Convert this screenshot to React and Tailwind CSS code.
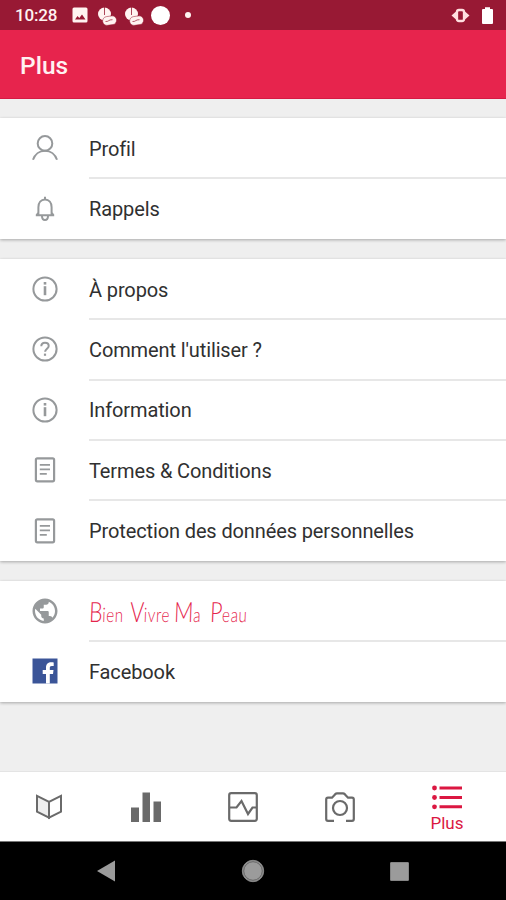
import React from "react";

const line = { fill: "none", stroke: "currentColor", strokeWidth: 2 };

function UserIcon() {
  return (
    <svg width="26" height="26" viewBox="0 0 26 26" {...line}>
      <circle cx="13" cy="8.400" r="7.300" />
      <path d="M1 24.800c1.800-5.500 6.500-9 12-9s10.200 3.500 12 9" />
    </svg>
  );
}

function BellIcon() {
  return (
    <svg width="26" height="26" viewBox="0 0 26 26" {...line}>
      <path d="M13 .800v2.500M3.800 19.300h18.400M6.400 19V11.200c0-4.500 2.600-7.700 6.600-7.700s6.600 3.200 6.600 7.700V19M4.500 19.300l2-2.800M21.500 19.300l-2-2.800" />
      <path d="M10 20c0 2.600 1.200 4 3 4s3-1.400 3-4" />
    </svg>
  );
}

function InfoIcon() {
  return (
    <svg width="26" height="26" viewBox="0 0 26 26" {...line}>
      <circle cx="13" cy="13" r="11.600" />
      <path d="M13 10.200v9" strokeWidth="2.600" />
      <path d="M13 6v2.600" strokeWidth="2.600" />
    </svg>
  );
}

function HelpIcon() {
  return (
    <svg width="26" height="26" viewBox="0 0 26 26" {...line}>
      <circle cx="13" cy="13" r="11.600" />
      <path d="M9.300 10.300c0-2.200 1.500-3.500 3.700-3.500s3.700 1.300 3.700 3.200c0 2.600-3.600 2.900-3.600 5.800" />
      <path d="M13 17.600v2.200" strokeWidth="2.200" />
    </svg>
  );
}

function DocumentIcon() {
  return (
    <svg width="26" height="26" viewBox="0 0 26 26" {...line}>
      <rect x="3.900" y="1.300" width="18.200" height="23" rx="1.500" strokeWidth="2.200" />
      <path d="M7.800 7.800h10.200M7.800 12.300h10.200M7.800 16.800h7" strokeWidth="1.700" />
    </svg>
  );
}

function GlobeIcon() {
  return (
    <svg width="30" height="30" viewBox="0 0 24 24" fill="currentColor">
      <path d="M12 2C6.480 2 2 6.480 2 12s4.480 10 10 10 10-4.480 10-10S17.520 2 12 2zm-1 17.930c-3.950-.49-7-3.850-7-7.930 0-.62.080-1.210.210-1.790L9 15v1c0 1.100.9 2 2 2v1.930zm6.900-2.540c-.26-.81-1-1.390-1.900-1.390h-1v-3c0-.55-.45-1-1-1H8v-2h2c.55 0 1-.45 1-1V7h2c1.100 0 2-.9 2-2v-.41c2.930 1.190 5 4.060 5 7.410 0 2.080-.8 3.970-2.100 5.390z" />
    </svg>
  );
}

function FacebookIcon() {
  return (
    <svg width="26" height="26" viewBox="0 0 26 26">
      <path fill="#3b5598" d="M.500.500h25v25H.500z" />
      <path fill="#fff" d="M14 25.500V16h-3.300v-3.900H14V9.400c0-3.500 2.200-5.200 5.200-5.200 1.100 0 2 .1 2.500.2v3.500h-1.900c-1.600 0-2 .8-2 2v2.200h3.700l-.5 3.900h-3.200v9.500z" />
    </svg>
  );
}

// Hand-lettered brand name: tall capitals over small, narrow lowercase
function BrandName() {
  const words = [
    ["B", "ien", "w-[41px]"],
    ["V", "ivre", "w-[44px]"],
    ["M", "a", "w-[36px]"],
    ["P", "eau", "w-[40px]"],
  ];
  return (
    <span className="flex items-baseline pt-[3px] font-['Lato',sans-serif] font-light text-[#e5254c]" aria-label="Bien Vivre Ma Peau">
      {words.map(([cap, rest, width]) => (
        <span key={cap} className={`${width} flex-none`}>
          <span className="inline-block origin-left -skew-x-3 scale-x-[.76] whitespace-nowrap">
            <span className="text-[28px] leading-none">{cap}</span>
            <span className="text-[20px] leading-none tracking-[0.8px]">{rest}</span>
          </span>
        </span>
      ))}
    </span>
  );
}

const sections = [
  [
    { icon: UserIcon, label: "Profil" },
    { icon: BellIcon, label: "Rappels" },
  ],
  [
    { icon: InfoIcon, label: "À propos" },
    { icon: HelpIcon, label: "Comment l'utiliser ?" },
    { icon: InfoIcon, label: "Information" },
    { icon: DocumentIcon, label: "Termes & Conditions" },
    { icon: DocumentIcon, label: "Protection des données personnelles" },
  ],
  [
    { icon: GlobeIcon, label: <BrandName /> },
    { icon: FacebookIcon, label: "Facebook" },
  ],
];

function Row({ icon: Icon, label, first }) {
  return (
    <li className="flex h-[60.400px] pl-8">
      <span className="mr-8 flex w-[25px] flex-none items-center justify-center text-[#96999b]">
        <span className="flex flex-none"><Icon /></span>
      </span>
      <span
        className={`-mt-px flex flex-1 items-center whitespace-nowrap border-t-2 ${first ? "border-transparent pt-px" : "border-[#e7e7e7]"}`}
      >
        {label}
      </span>
    </li>
  );
}

function CookieIcon() {
  return (
    <svg width="20" height="19" viewBox="0 0 20 19">
      <circle cx="7.500" cy="7" r="6.500" fill="#fff3f1" />
      <path d="M7.500 0v8" stroke="#981934" strokeWidth=".8" />
      <rect x="5.500" y="9.300" width="14" height="8.800" rx="4.400" fill="#fff3f1" stroke="#981934" strokeWidth=".5" transform="rotate(-8 12 13)" />
      <path d="M8.500 14.500c3 .5 3-2 7-1.800" fill="none" stroke="#981934" strokeWidth=".7" />
    </svg>
  );
}

function StatusBar() {
  return (
    <div className="flex h-[30px] items-center bg-[#981934] pl-[15px] pr-[13px] text-[#fff3f1]">
      <span className="w-[57px] pt-0.5 text-[17px] font-medium tracking-[-0.2px]">10:28</span>
      <svg width="16" height="16" viewBox="0 0 16 16">
        <path fill="currentColor" fillRule="evenodd" d="M2 .5h12q1.500 0 1.500 1.500v12q0 1.500-1.500 1.500H2Q.5 15.500.5 14V2Q.5.500 2 .5zM3 12.500h10.500L10 7.500l-2.700 3.600-1.800-2z" />
      </svg>
      <span className="ml-[9px] mr-[7px] pt-0.5"><CookieIcon /></span>
      <span className="pt-0.5"><CookieIcon /></span>
      <span className="ml-[7px] size-[19px] rounded-full bg-white" />
      <span className="ml-[15px] size-[6px] rounded-full bg-[#fff3f1]" />
      <svg className="ml-auto mr-[12px]" width="19" height="15" viewBox="0 0 19 15" fill="#ffdfe0">
        <path d="M5 3.500v8L.500 7.500zM14 3.500v8l4.500-4z" />
        <rect x="6" y="2" width="7" height="11" rx="2" fill="#981934" stroke="#ffdfe0" strokeWidth="2.300" />
      </svg>
      <svg width="11" height="17" viewBox="0 0 11 17" fill="#fff">
        <path d="M3 2V.3h5V2h2q1 0 1 1v13q0 1-1 1H1q-1 0-1-1V3q0-1 1-1z" />
      </svg>
    </div>
  );
}

function TabBar() {
  return (
    <nav className="flex h-[70px] flex-none border-t border-[#e4e4e4] bg-white text-[#6a6a6a]">
      <button className="flex w-[97px] items-center justify-center" aria-label="Journal">
        <svg width="28" height="28" viewBox="0 0 28 28" {...line}>
          <path fill="#eeeeee" d="M2 2.800 14 8.800v15.800L2 18.600z" />
          <path d="M14 8.800 26 2.800v15.800l-12 6z" />
        </svg>
      </button>
      <button className="flex w-[97px] items-center justify-center" aria-label="Statistiques">
        <svg width="30" height="30" viewBox="0 0 30 30" fill="currentColor">
          <path d="M0 15.500h8V30H0zM11.500.5h7.500V30h-7.500zM22.500 9.500H30V30h-7.500z" />
        </svg>
      </button>
      <button className="flex w-[97px] items-center justify-center" aria-label="Suivi">
        <svg width="30" height="30" viewBox="0 0 30 30" {...line} strokeWidth="2.200">
          <rect x="1.200" y="1.200" width="27.600" height="27.600" rx="2" />
          <path d="M1 15.500h7.500L13.500 9l6.500 13 4.500-6.500H29" />
        </svg>
      </button>
      <button className="flex w-[97px] items-center justify-center" aria-label="Photos">
        <svg width="30" height="30" viewBox="0 0 30 30" {...line} strokeWidth="2.200">
          <path d="M9 28.800H3q-1.800 0-1.800-1.800V7.500q0-1.800 1.800-1.800h4l3-3.300q1-1 2-1h6q1 0 2 1l3 3.300h4q1.800 0 1.800 1.800V27q0 1.800-1.800 1.800h-6" />
          <circle cx="15" cy="16" r="7" />
        </svg>
      </button>
      <button className="flex flex-1 flex-col items-center pt-[12px] text-[#db1741]">
        <svg width="30" height="26" viewBox="0 0 30 26" fill="currentColor">
          <path d="M7.500 2.500H30v3H7.500zM7.500 12H30v3H7.500zM7.500 21.300H30v3H7.500z" />
          <circle cx="2.500" cy="4" r="2.400" />
          <circle cx="2.500" cy="13.500" r="2.400" />
          <circle cx="2.500" cy="22.800" r="2.400" />
        </svg>
        <span className="mt-[3px] text-[17px] leading-5">Plus</span>
      </button>
    </nav>
  );
}

export default function App() {
  return (
    <div className="flex h-[900px] w-[506px] flex-col overflow-hidden bg-[#efefef] font-['Roboto',sans-serif] text-[#303030]">
      <StatusBar />
      <header className="flex h-[69px] flex-none items-center border-b border-[#d51a43] bg-[#e7244d] px-5 pt-1 text-[24.500px] font-medium text-[#fff1f2]">
        Plus
      </header>
      <main className="flex flex-1 flex-col gap-[20px] pt-[19px]">
        {sections.map((rows, i) => (
          <ul key={i} className="bg-white text-[20px] tracking-[-0.120px] shadow-[0_1px_3px_rgba(0,0,0,0.3)]">
            {rows.map((row, j) => (
              <Row key={j} {...row} first={j === 0} />
            ))}
          </ul>
        ))}
      </main>
      <TabBar />
      <div className="flex h-[59px] flex-none items-center justify-between border-t border-[#777] bg-black pl-[97px] pr-[97px]">
        <svg width="18" height="22" viewBox="0 0 18 22" fill="#9b9b9b">
          <path d="M18 .5v21L0 11z" />
        </svg>
        <svg width="24" height="24" viewBox="0 0 24 24">
          <circle cx="12" cy="12" r="10.700" fill="#9b9b9b" stroke="#888" />
          <circle cx="12" cy="12" r="9.300" fill="none" stroke="#555" strokeWidth=".8" />
        </svg>
        <span className="size-[19px] rounded-[1px] border border-[#858585] bg-[#9b9b9b]" />
      </div>
    </div>
  );
}
